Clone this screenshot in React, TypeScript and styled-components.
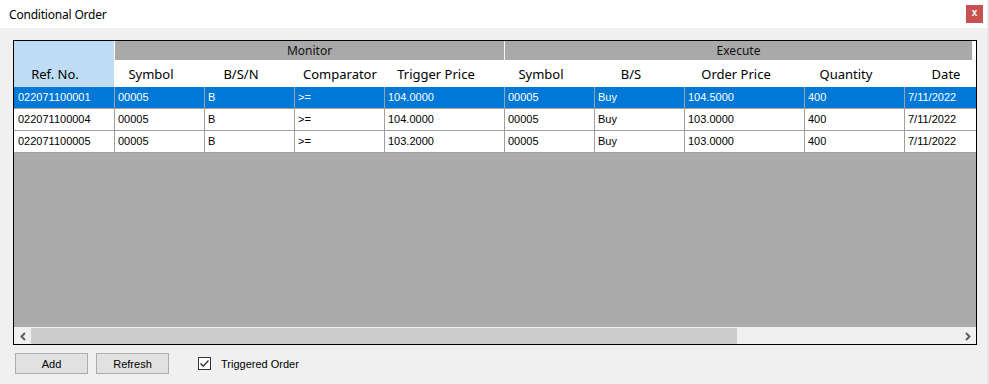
import React from "react";
import styled, { createGlobalStyle } from "styled-components";

const GlobalStyle = createGlobalStyle`
  html, body { margin: 0; padding: 0; background: #f0f0f0; overflow: hidden; }
  * { box-sizing: border-box; }
`;

const UI_FONT = `"Noto Sans", "Open Sans", "DejaVu Sans", sans-serif`;
const DATA_FONT = `"Liberation Sans", Arial, sans-serif`;

const Window = styled.div`
  width: 989px;
  height: 384px;
  display: flex;
  flex-direction: column;
  background: #f0f0f0;
  font-family: ${UI_FONT};
  color: #000;
  border-right: 2px solid #e6e6e6;
`;

const TitleBar = styled.div`
  height: 28px;
  flex: none;
  background: #fff;
  display: flex;
  align-items: center;
  justify-content: space-between;
  padding: 0 4px 0 9px;
`;

const Title = styled.span`
  font-size: 12px;
  letter-spacing: -0.2px;
`;

const CloseButton = styled.div`
  width: 17px;
  height: 18px;
  margin-top: -1px;
  background: #c75050;
  color: #fff;
  font-family: ${DATA_FONT};
  font-size: 10px;
  font-weight: bold;
  display: flex;
  align-items: center;
  justify-content: center;
  padding-bottom: 2px;
`;

const Body = styled.div`
  flex: 1;
  display: flex;
  flex-direction: column;
  padding: 12px 0 0 13px;
`;

const Grid = styled.div`
  width: 964px;
  height: 305px;
  border: 1px solid #000;
  display: flex;
  flex-direction: column;
  background: #ababab;
`;

const Viewport = styled.div`
  flex: 1;
  overflow: hidden;
`;

const Table = styled.div`
  width: 991px;
  display: flex;
  flex-direction: column;
`;

const HeaderArea = styled.div`
  display: flex;
  height: 46px;
`;

const RefHeader = styled.div`
  width: 101px;
  flex: none;
  background: #bedcf3;
  border-right: 1px solid #fff;
  display: flex;
  align-items: flex-end;
  justify-content: safe center;
  padding: 0 26px 4px 8px;
  font-size: 13px;
`;

const HeaderStack = styled.div`
  flex: 1;
  display: flex;
  flex-direction: column;
`;

const GroupRow = styled.div`
  height: 19px;
  display: flex;
  background: #fff;
`;

const GroupCell = styled.div<{ $w: number }>`
  width: ${(p) => p.$w}px;
  flex: none;
  background: #a9a9a9;
  border-right: 1px solid #f4f4f4;
  display: flex;
  align-items: center;
  justify-content: center;
  font-size: 12px;
  color: #111;
  padding-bottom: 1px;
`;

const ColumnRow = styled.div`
  height: 27px;
  display: flex;
  background: #fff;
`;

const ColumnHeader = styled.div<{ $w: number }>`
  width: ${(p) => p.$w}px;
  flex: none;
  display: flex;
  align-items: center;
  justify-content: safe center;
  font-size: 13px;
  padding: 1px 26px 0 8px;
  white-space: nowrap;
`;

const DataRow = styled.div<{ $selected?: boolean }>`
  height: 22px;
  display: flex;
  border-bottom: 1px solid #a0a0a0;
  background: ${(p) => (p.$selected ? "#0078d7" : "#fff")};
  color: ${(p) => (p.$selected ? "#fff" : "#000")};
`;

const Cell = styled.div<{ $w: number; $first?: boolean }>`
  width: ${(p) => p.$w}px;
  flex: none;
  border-right: 1px solid #a0a0a0;
  padding-left: ${(p) => (p.$first ? 4 : 3)}px;
  font-family: ${DATA_FONT};
  font-size: 11px;
  line-height: 21px;
  white-space: nowrap;
  overflow: hidden;
`;

const ScrollBar = styled.div`
  height: 17px;
  flex: none;
  display: flex;
  background: #f0f0f0;
  border-top: 1px solid #f0f0f0;
`;

const ArrowButton = styled.div`
  width: 17px;
  flex: none;
  display: flex;
  align-items: center;
  justify-content: center;
`;

const Track = styled.div`
  flex: 1;
  display: flex;
`;

const Thumb = styled.div`
  width: 706px;
  background: #cdcdcd;
`;

const Footer = styled.div`
  display: flex;
  align-items: center;
  padding: 8px 0 0 2px;
  font-family: ${DATA_FONT};
  font-size: 11px;
`;

const Button = styled.div`
  width: 73px;
  height: 21px;
  margin-right: 8px;
  background: #e1e1e1;
  border: 1px solid #adadad;
  display: flex;
  align-items: center;
  justify-content: center;
`;

const CheckLabel = styled.label`
  display: flex;
  align-items: center;
  margin-left: 21px;
`;

const Box = styled.span`
  width: 13px;
  height: 13px;
  border: 1px solid #333;
  background: #fff;
  display: flex;
  align-items: center;
  justify-content: center;
  margin-right: 10px;
`;

type Col = { key: string; title: string; w: number };

const monitorCols: Col[] = [
  { key: "sym", title: "Symbol", w: 90 },
  { key: "bsn", title: "B/S/N", w: 90 },
  { key: "cmp", title: "Comparator", w: 90 },
  { key: "trig", title: "Trigger Price", w: 120 },
];
const executeCols: Col[] = [
  { key: "esym", title: "Symbol", w: 90 },
  { key: "bs", title: "B/S", w: 90 },
  { key: "price", title: "Order Price", w: 120 },
  { key: "qty", title: "Quantity", w: 100 },
  { key: "date", title: "Date", w: 100 },
];
const allCols: Col[] = [{ key: "ref", title: "Ref. No.", w: 101 }, ...monitorCols, ...executeCols];

const rows: Record<string, string>[] = [
  { ref: "022071100001", sym: "00005", bsn: "B", cmp: ">=", trig: "104.0000", esym: "00005", bs: "Buy", price: "104.5000", qty: "400", date: "7/11/2022" },
  { ref: "022071100004", sym: "00005", bsn: "B", cmp: ">=", trig: "104.0000", esym: "00005", bs: "Buy", price: "103.0000", qty: "400", date: "7/11/2022" },
  { ref: "022071100005", sym: "00005", bsn: "B", cmp: ">=", trig: "103.2000", esym: "00005", bs: "Buy", price: "103.0000", qty: "400", date: "7/11/2022" },
];

const sum = (cols: Col[]) => cols.reduce((a, c) => a + c.w, 0);

const Chevron = ({ dir }: { dir: "left" | "right" }) => (
  <svg width="6" height="9" viewBox="0 0 6 9">
    <polyline
      points={dir === "left" ? "5,1 1.5,4.5 5,8" : "1,1 4.5,4.5 1,8"}
      fill="none"
      stroke="#606060"
      strokeWidth="2"
    />
  </svg>
);

export default function App() {
  return (
    <>
      <GlobalStyle />
      <Window>
        <TitleBar>
          <Title>Conditional Order</Title>
          <CloseButton>x</CloseButton>
        </TitleBar>
        <Body>
          <Grid>
            <Viewport>
              <Table>
                <HeaderArea>
                  <RefHeader>Ref. No.</RefHeader>
                  <HeaderStack>
                    <GroupRow>
                      <GroupCell $w={sum(monitorCols)}>Monitor</GroupCell>
                      <GroupCell $w={468}>Execute</GroupCell>
                    </GroupRow>
                    <ColumnRow>
                      {[...monitorCols, ...executeCols].map((c) => (
                        <ColumnHeader key={c.key} $w={c.w}>
                          {c.title}
                        </ColumnHeader>
                      ))}
                    </ColumnRow>
                  </HeaderStack>
                </HeaderArea>
                {rows.map((r, i) => (
                  <DataRow key={r.ref} $selected={i === 0}>
                    {allCols.map((c, j) => (
                      <Cell key={c.key} $w={c.w} $first={j === 0}>
                        {r[c.key]}
                      </Cell>
                    ))}
                  </DataRow>
                ))}
              </Table>
            </Viewport>
            <ScrollBar>
              <ArrowButton>
                <Chevron dir="left" />
              </ArrowButton>
              <Track>
                <Thumb />
              </Track>
              <ArrowButton>
                <Chevron dir="right" />
              </ArrowButton>
            </ScrollBar>
          </Grid>
          <Footer>
            <Button>Add</Button>
            <Button>Refresh</Button>
            <CheckLabel>
              <Box>
                <svg width="11" height="11" viewBox="0 0 11 11">
                  <polyline points="1.5,5.5 4.2,8.2 9.5,2.5" fill="none" stroke="#222" strokeWidth="1.2" />
                </svg>
              </Box>
              Triggered Order
            </CheckLabel>
          </Footer>
        </Body>
      </Window>
    </>
  );
}
